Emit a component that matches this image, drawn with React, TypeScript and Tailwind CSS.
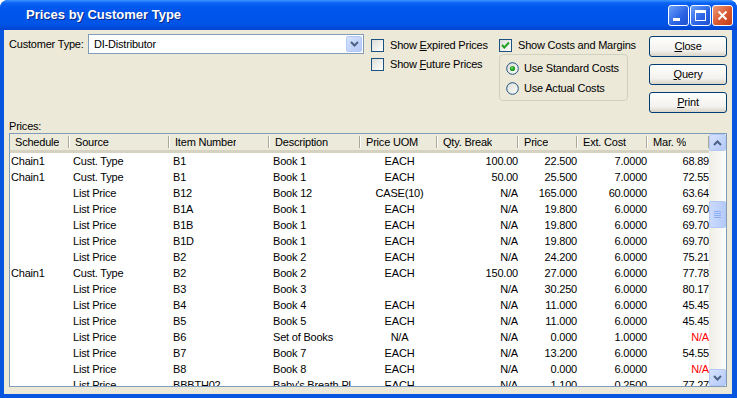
import React from "react";

type Row = {
  sched: string;
  source: string;
  item: string;
  desc: string;
  uom: string;
  qty: string;
  price: string;
  cost: string;
  mar: string;
};

const rows: Row[] = [
  { sched: "Chain1", source: "Cust. Type", item: "B1", desc: "Book 1", uom: "EACH", qty: "100.00", price: "22.500", cost: "7.0000", mar: "68.89" },
  { sched: "Chain1", source: "Cust. Type", item: "B1", desc: "Book 1", uom: "EACH", qty: "50.00", price: "25.500", cost: "7.0000", mar: "72.55" },
  { sched: "", source: "List Price", item: "B12", desc: "Book 12", uom: "CASE(10)", qty: "N/A", price: "165.000", cost: "60.0000", mar: "63.64" },
  { sched: "", source: "List Price", item: "B1A", desc: "Book 1", uom: "EACH", qty: "N/A", price: "19.800", cost: "6.0000", mar: "69.70" },
  { sched: "", source: "List Price", item: "B1B", desc: "Book 1", uom: "EACH", qty: "N/A", price: "19.800", cost: "6.0000", mar: "69.70" },
  { sched: "", source: "List Price", item: "B1D", desc: "Book 1", uom: "EACH", qty: "N/A", price: "19.800", cost: "6.0000", mar: "69.70" },
  { sched: "", source: "List Price", item: "B2", desc: "Book 2", uom: "EACH", qty: "N/A", price: "24.200", cost: "6.0000", mar: "75.21" },
  { sched: "Chain1", source: "Cust. Type", item: "B2", desc: "Book 2", uom: "EACH", qty: "150.00", price: "27.000", cost: "6.0000", mar: "77.78" },
  { sched: "", source: "List Price", item: "B3", desc: "Book 3", uom: "", qty: "N/A", price: "30.250", cost: "6.0000", mar: "80.17" },
  { sched: "", source: "List Price", item: "B4", desc: "Book 4", uom: "EACH", qty: "N/A", price: "11.000", cost: "6.0000", mar: "45.45" },
  { sched: "", source: "List Price", item: "B5", desc: "Book 5", uom: "EACH", qty: "N/A", price: "11.000", cost: "6.0000", mar: "45.45" },
  { sched: "", source: "List Price", item: "B6", desc: "Set of Books", uom: "N/A", qty: "N/A", price: "0.000", cost: "1.0000", mar: "N/A" },
  { sched: "", source: "List Price", item: "B7", desc: "Book 7", uom: "EACH", qty: "N/A", price: "13.200", cost: "6.0000", mar: "54.55" },
  { sched: "", source: "List Price", item: "B8", desc: "Book 8", uom: "EACH", qty: "N/A", price: "0.000", cost: "6.0000", mar: "N/A" },
  { sched: "", source: "List Price", item: "BBBTH02", desc: "Baby's Breath Pl", uom: "EACH", qty: "N/A", price: "1.100", cost: "0.2500", mar: "77.27" },
];

const Check = ({ checked }: { checked?: boolean }) => (
  <div className="w-[13px] h-[13px] shrink-0 border border-[#1c5180] bg-[linear-gradient(135deg,#dcdcd7,#ffffff)]">
    {checked && (
      <svg width="11" height="11" viewBox="0 0 11 11">
        <path d="M2 5 L4.3 7.5 L9 2.5" stroke="#21a121" strokeWidth="2" fill="none" />
      </svg>
    )}
  </div>
);

const Radio = ({ on }: { on?: boolean }) => (
  <svg width="13" height="13" viewBox="0 0 13 13" className="shrink-0">
    <defs>
      <linearGradient id="rg" x1="0" y1="0" x2="1" y2="1">
        <stop offset="0" stopColor="#dcdcd7" />
        <stop offset="1" stopColor="#ffffff" />
      </linearGradient>
    </defs>
    <circle cx="6.5" cy="6.5" r="5.8" fill="url(#rg)" stroke="#1c5180" strokeWidth="1" />
    {on && <circle cx="6.5" cy="6.5" r="2.6" fill="#21a121" />}
    {on && <circle cx="6" cy="6" r="1" fill="#7ed97e" />}
  </svg>
);

const XpButton = ({ children }: { children: React.ReactNode }) => (
  <div className="h-[21px] w-[78px] rounded-[3px] border border-[#003c74] bg-[linear-gradient(to_bottom,#ffffff,#f3f2ee_70%,#d8d4c8)] flex items-center justify-center">
    {children}
  </div>
);

const ScrollBtn = ({ up }: { up?: boolean }) => (
  <div className="h-[17px] w-[17px] rounded-[2px] border border-[#b4c8f6] bg-[linear-gradient(135deg,#d6e2fd,#b4c9f8)] flex items-center justify-center">
    <svg width="9" height="6" viewBox="0 0 9 6">
      <path d={up ? "M1 5 L4.5 1.5 L8 5" : "M1 1 L4.5 4.5 L8 1"} stroke="#4d6185" strokeWidth="2" fill="none" />
    </svg>
  </div>
);

const Head = ({ w, label }: { w: string; label: string }) => (
  <div className={`${w} shrink-0 h-full flex items-center justify-between pl-[5px]`}>
    <span className="truncate">{label}</span>
    <div className="flex h-[12px]">
      <div className="w-px bg-[#aca899]" />
      <div className="w-px bg-white" />
    </div>
  </div>
);

export default function App() {
  return (
    <div className="w-[737px] h-[398px] bg-white font-['Liberation_Sans',Arial,sans-serif] text-[11px] tracking-[-0.2px] text-black">
      <div className="w-full h-full rounded-t-[8px] overflow-hidden flex flex-col bg-[#0855e0]">
        {/* title bar */}
        <div className="h-[30px] shrink-0 flex items-center pl-[26px] pr-[4px] bg-[linear-gradient(to_bottom,#3d95ff_0px,#0a63f5_3px,#0058ee_7px,#0055eb_15px,#0054e6_24px,#0049d8_28px,#0044cf_30px)]">
          <span className="flex-1 text-white font-bold text-[13px] tracking-normal [text-shadow:1px_1px_0_#0a2a8a]">
            Prices by Customer Type
          </span>
          <div className="flex gap-[1px] pt-[1px]">
            <div className="w-[21px] h-[21px] rounded-[3px] border border-white bg-[linear-gradient(135deg,#6b9ff9,#2a63e4_60%,#1f52d0)] relative">
              <div className="absolute left-[4px] top-[12px] w-[7px] h-[3px] bg-white" />
            </div>
            <div className="w-[21px] h-[21px] rounded-[3px] border border-white bg-[linear-gradient(135deg,#6b9ff9,#2a63e4_60%,#1f52d0)] flex items-center justify-center">
              <div className="w-[11px] h-[11px] border border-white border-t-[3px]" />
            </div>
            <div className="w-[21px] h-[21px] rounded-[3px] border border-white bg-[linear-gradient(135deg,#eb9a7c,#d9582f_55%,#c1401c)] flex items-center justify-center">
              <svg width="11" height="11" viewBox="0 0 11 11">
                <path d="M1.5 1.5 L9.5 9.5 M9.5 1.5 L1.5 9.5" stroke="white" strokeWidth="2" />
              </svg>
            </div>
          </div>
        </div>

        {/* body */}
        <div className="flex-1 flex flex-col pl-[4px] pr-[5px] pb-[4px] min-h-0">
          <div className="flex-1 flex flex-col bg-[#ece9d8] pl-[5px] pr-[5px] pb-[7px] min-h-0">
            <div className="flex items-start h-[83px] shrink-0">
              <div className="mt-[4px] flex items-center h-[20px]">
                <span className="w-[79px]">Customer Type:</span>
                <div className="w-[276px] h-[20px] border border-[#7f9db9] bg-white flex items-center">
                  <span className="flex-1 pl-[5px]">DI-Distributor</span>
                  <div className="w-[16px] h-[16px] m-[1px] rounded-[2px] border border-[#b4c8f6] bg-[linear-gradient(135deg,#d6e2fd,#b4c9f8)] flex items-center justify-center">
                    <svg width="9" height="6" viewBox="0 0 9 6">
                      <path d="M1 1 L4.5 4.5 L8 1" stroke="#4d6185" strokeWidth="2" fill="none" />
                    </svg>
                  </div>
                </div>
              </div>

              <div className="ml-[7px] w-[128px] mt-[9px] flex flex-col gap-[6px]">
                <div className="flex items-center gap-[6px] h-[13px]">
                  <Check />
                  <span>
                    Show <span className="underline">E</span>xpired Prices
                  </span>
                </div>
                <div className="flex items-center gap-[6px] h-[13px]">
                  <Check />
                  <span>
                    Show <span className="underline">F</span>uture Prices
                  </span>
                </div>
              </div>

              <div className="w-[150px] mt-[9px] flex flex-col">
                <div className="flex items-center gap-[6px] h-[13px]">
                  <Check checked />
                  <span>Show Costs and Margins</span>
                </div>
                <div className="mt-[2px] w-[129px] h-[47px] rounded-[4px] border border-[#d0d0bf] pl-[6px] pt-[7px] flex flex-col gap-[7px]">
                  <div className="flex items-center gap-[5px] h-[13px]">
                    <Radio on />
                    <span>Use Standard Costs</span>
                  </div>
                  <div className="flex items-center gap-[5px] h-[13px]">
                    <Radio />
                    <span>Use Actual Costs</span>
                  </div>
                </div>
              </div>

              <div className="mt-[6px] flex flex-col gap-[7px]">
                <XpButton>
                  <span className="underline">C</span>lose
                </XpButton>
                <XpButton>
                  <span className="underline">Q</span>uery
                </XpButton>
                <XpButton>
                  <span className="underline">P</span>rint
                </XpButton>
              </div>
            </div>

            <div className="mt-[7px] h-[13px] leading-[13px] shrink-0">Prices:</div>

            {/* table */}
            <div className="flex-1 min-h-0 border border-[#7f9db9] bg-white flex">
              <div className="flex-1 min-w-0 flex flex-col overflow-hidden">
                <div className="h-[19px] shrink-0 flex bg-[#ebeadb] border-b-[3px] border-[#d6d2c2]">
                  <Head w="w-[60px]" label="Schedule" />
                  <Head w="w-[100px]" label="Source" />
                  <Head w="w-[100px]" label="Item Number" />
                  <Head w="w-[91px]" label="Description" />
                  <Head w="w-[77px]" label="Price UOM" />
                  <Head w="w-[81px]" label="Qty. Break" />
                  <Head w="w-[59px]" label="Price" />
                  <Head w="w-[70px]" label="Ext. Cost" />
                  <Head w="w-[62px]" label="Mar. %" />
                </div>
                <div className="flex-1 min-h-0 overflow-hidden">
                  {rows.map((r, i) => (
                    <div key={i} className="h-[16px] leading-[16px] flex whitespace-nowrap">
                      <div className="w-[60px] shrink-0 pl-[1px]">{r.sched}</div>
                      <div className="w-[100px] shrink-0 pl-[3px]">{r.source}</div>
                      <div className="w-[100px] shrink-0 pl-[3px]">{r.item}</div>
                      <div className="w-[91px] shrink-0 pl-[3px] overflow-hidden">{r.desc}</div>
                      <div className="w-[77px] shrink-0 text-center">{r.uom}</div>
                      <div className="w-[81px] shrink-0 text-right pr-[1px]">{r.qty}</div>
                      <div className="w-[59px] shrink-0 text-right pr-[1px]">{r.price}</div>
                      <div className="w-[70px] shrink-0 text-right pr-[1px]">{r.cost}</div>
                      <div className={`w-[62px] shrink-0 text-right pr-[1px] ${r.mar === "N/A" ? "text-[#ff0000]" : ""}`}>
                        {r.mar}
                      </div>
                    </div>
                  ))}
                </div>
              </div>

              {/* scrollbar */}
              <div className="w-[17px] shrink-0 flex flex-col bg-[linear-gradient(to_right,#eeede5,#fdfdfa)]">
                <ScrollBtn up />
                <div className="h-[50px] shrink-0" />
                <div className="h-[27px] w-[17px] rounded-[2px] border border-[#b4c8f6] bg-[linear-gradient(to_right,#cbdafc,#b6cbf9)] flex flex-col items-center justify-center gap-[1px]">
                  <div className="w-[7px] h-px bg-[#8cb0f8]" />
                  <div className="w-[7px] h-px bg-[#8cb0f8]" />
                  <div className="w-[7px] h-px bg-[#8cb0f8]" />
                  <div className="w-[7px] h-px bg-[#8cb0f8]" />
                </div>
                <div className="flex-1" />
                <ScrollBtn />
              </div>
            </div>
          </div>
        </div>
      </div>
    </div>
  );
}
